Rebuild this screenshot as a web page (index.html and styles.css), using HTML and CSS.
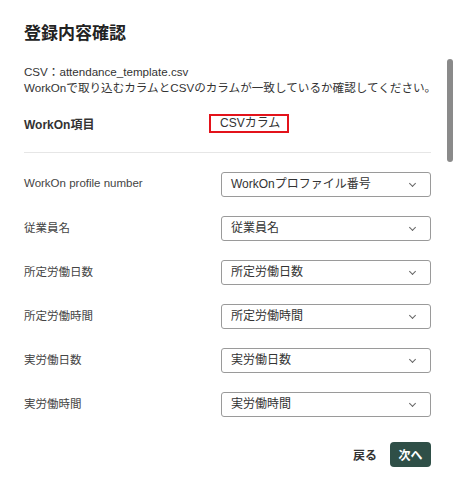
FILE: index.html
```html
<!DOCTYPE html>
<html lang="ja">
<head>
    <meta charset="utf-8">
    <title>登録内容確認</title>
    <link rel="stylesheet" href="styles.css">
</head>
<body>
    <div class="modal">
        <h1>登録内容確認</h1>

        <p class="desc">
            CSV：attendance_template.csv<br>
            WorkOnで取り込むカラムとCSVのカラムが一致しているか確認してください。
        </p>

        <div class="map-head">
            <div class="col-label">WorkOn項目</div>
            <div class="col-csv"><span class="marked">CSVカラム</span></div>
        </div>

        <div class="map-list">
            <div class="map-row">
                <div class="col-label">WorkOn profile number</div>
                <div class="select">WorkOnプロファイル番号<span class="chev"></span></div>
            </div>
            <div class="map-row">
                <div class="col-label">従業員名</div>
                <div class="select">従業員名<span class="chev"></span></div>
            </div>
            <div class="map-row">
                <div class="col-label">所定労働日数</div>
                <div class="select">所定労働日数<span class="chev"></span></div>
            </div>
            <div class="map-row">
                <div class="col-label">所定労働時間</div>
                <div class="select">所定労働時間<span class="chev"></span></div>
            </div>
            <div class="map-row">
                <div class="col-label">実労働日数</div>
                <div class="select">実労働日数<span class="chev"></span></div>
            </div>
            <div class="map-row">
                <div class="col-label">実労働時間</div>
                <div class="select">実労働時間<span class="chev"></span></div>
            </div>
        </div>

        <div class="actions">
            <button class="btn-back">戻る</button>
            <button class="btn-next">次へ</button>
        </div>

        <!-- overlay scrollbar -->
        <div class="scroll-thumb"></div>
    </div>
</body>
</html>
```

FILE: styles.css
```css
body {
    margin: 0;
    background: #fff;
    font-family: "Liberation Sans", "Noto Sans CJK JP", sans-serif;
    color: #222;
}
.modal {
    position: relative;
    width: 455px;
    height: 493px;
    padding: 22px 24px 0 24px;
    box-sizing: border-box;
    overflow: hidden;
}
h1 {
    margin: 0;
    font-size: 17px;
    line-height: 24px;
    font-weight: bold;
    color: #222;
}
.desc {
    margin: 18px 0 0 0;
    font-size: 11.6px;
    line-height: 16px;
    white-space: nowrap;
    color: #333;
}
.map-head {
    display: flex;
    align-items: center;
    height: 19px;
    margin-top: 18px;
    padding-bottom: 19px;
    border-bottom: 1px solid #e6e6e6;
    font-size: 12px;
    font-weight: bold;
}
.map-head .col-label {
    width: 185px;
    color: #333;
}
.marked {
    display: block;
    width: 80px;
    height: 19px;
    box-sizing: border-box;
    border: 2px solid #e3131b;
    padding-left: 9px;
    line-height: 15px;
    font-weight: normal;
    color: #333;
}
.map-list {
    display: flex;
    flex-direction: column;
    gap: 19px;
    margin-top: 19px;
}
.map-row {
    display: flex;
    align-items: center;
    height: 25px;
}
.map-row .col-label {
    width: 197px;
    margin-top: -3px;
    font-size: 11.5px;
    color: #444;
}
.select {
    position: relative;
    width: 210px;
    height: 25px;
    box-sizing: border-box;
    border: 1px solid #9a9a9a;
    border-radius: 3px;
    padding-left: 9px;
    font-size: 12px;
    line-height: 23px;
    color: #333;
}
.chev {
    position: absolute;
    right: 15px;
    top: 8px;
    width: 4px;
    height: 4px;
    border-right: 1px solid #666;
    border-bottom: 1px solid #666;
    transform: rotate(45deg);
}
.actions {
    display: flex;
    justify-content: flex-end;
    align-items: center;
    gap: 13px;
    margin-top: 25px;
}
.actions button {
    font-family: inherit;
    font-size: 12px;
    font-weight: bold;
    cursor: pointer;
}
.btn-back {
    background: none;
    border: none;
    padding: 0;
    color: #333;
}
.btn-next {
    width: 41px;
    height: 25px;
    border: none;
    border-radius: 4px;
    background: #2f4f47;
    color: #fff;
    padding: 0;
}
.scroll-thumb {
    position: absolute;
    right: 2px;
    top: 59px;
    width: 6px;
    height: 103px;
    border-radius: 3px;
    background: #8a8a8a;
}
```
